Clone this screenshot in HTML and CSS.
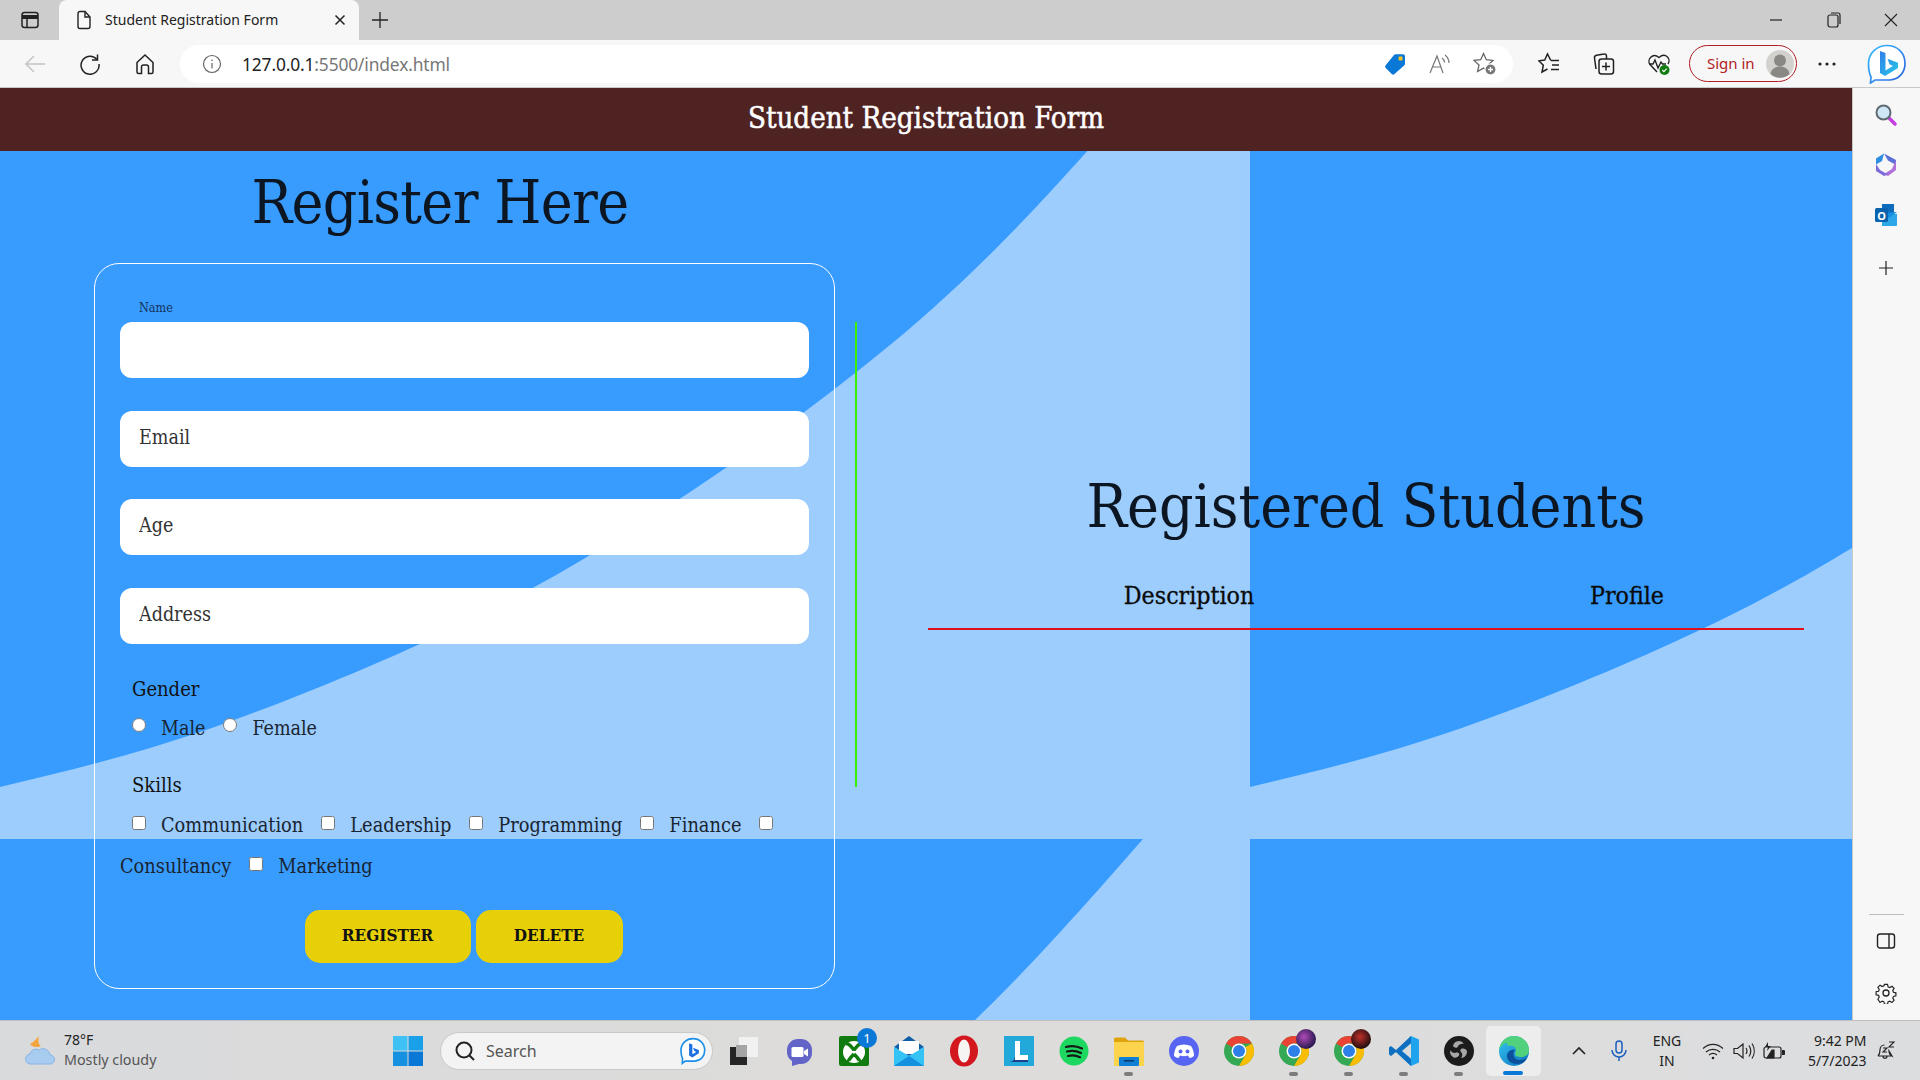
FILE: index.html
```html
<!DOCTYPE html>
<html lang="en">
<head>
<meta charset="utf-8">
<title>Student Registration Form</title>
<link rel="stylesheet" href="styles.css">
</head>
<body>
<div class="tabbar">
  <div class="tb-cell side-toggle"><svg width="20" height="20" viewBox="0 0 20 20" fill="none" stroke="#222" stroke-width="1.5"><rect x="2" y="2.5" width="16" height="15" rx="2.5"/><path d="M2 7h16" stroke-width="4"/><path d="M7 7v10"/></svg></div>
  <div class="tab">
    <svg class="tab-doc" width="18" height="20" viewBox="0 0 18 20" fill="none" stroke="#222" stroke-width="1.4"><path d="M3 3.5a2 2 0 0 1 2-2h5l5 5.5v9.500a2 2 0 0 1-2 2H5a2 2 0 0 1-2-2z"/><path d="M10 1.500v5.500h5"/></svg>
    <span class="tab-title">Student Registration Form</span>
    <svg class="tab-close" width="12" height="12" viewBox="0 0 12 12" stroke="#222" stroke-width="1.5"><path d="M1.500 1.500l9 9M10.500 1.500l-9 9"/></svg>
  </div>
  <div class="tb-cell new-tab"><svg width="18" height="18" viewBox="0 0 18 18" stroke="#222" stroke-width="1.3"><path d="M9 1v16M1 9h16"/></svg></div>
  <div class="spacer"></div>
  <div class="win-btn"><svg width="14" height="14" viewBox="0 0 14 14" stroke="#222" stroke-width="1.2"><path d="M1 7h12"/></svg></div>
  <div class="win-btn"><svg width="14" height="16" viewBox="0 0 14 16" fill="none" stroke="#222" stroke-width="1.2"><rect x="1" y="3" width="10" height="12" rx="2"/><path d="M4 1h7a2 2 0 0 1 2 2v9"/></svg></div>
  <div class="win-btn"><svg width="14" height="14" viewBox="0 0 14 14" stroke="#222" stroke-width="1.1"><path d="M1 1l12 12M13 1L1 13"/></svg></div>
</div>

<div class="toolbar">
  <div class="nav-btn"><svg width="22" height="20" viewBox="0 0 22 20" fill="none" stroke="#c4c4c4" stroke-width="1.500"><path d="M21 10H2M10 2l-8 8 8 8"/></svg></div>
  <div class="nav-btn"><svg width="22" height="22" viewBox="0 0 22 22" fill="none" stroke="#222" stroke-width="1.500"><path d="M18 6.500A9 9 0 1 0 20 11"/><path d="M18.500 1.500v5.500H13"/></svg></div>
  <div class="nav-btn"><svg width="20" height="22" viewBox="0 0 20 22" fill="none" stroke="#222" stroke-width="1.500"><path d="M2 9.500L10 2l8 7.500V19a1.500 1.500 0 0 1-1.500 1.500h-3V14a2 2 0 0 0-2-2h-3a2 2 0 0 0-2 2v6.500h-3A1.500 1.500 0 0 1 2 19z"/></svg></div>
  <div class="address">
    <svg class="info" width="20" height="20" viewBox="0 0 20 20" fill="none" stroke="#666" stroke-width="1.200"><circle cx="10" cy="10" r="8.500"/><path d="M10 9v5.500M10 5.500v1.500"/></svg>
    <span class="url"><span class="host">127.0.0.1</span>:5500/index.html</span>
    <div class="spacer"></div>
    <div class="addr-icon"><svg width="22" height="24" viewBox="0 0 22 24"><path d="M10 3a2 2 0 0 1 1.500-.7H19a2 2 0 0 1 2 2v7.500a2 2 0 0 1-.6 1.400L10.500 22a2 2 0 0 1-2.800 0l-6-6a2 2 0 0 1 0-2.800z" fill="#0a78d7"/><rect x="14.500" y="4.500" width="4" height="4" rx="1" fill="#f6c323"/></svg></div>
    <div class="addr-icon"><svg width="22" height="22" viewBox="0 0 22 22" fill="none" stroke="#777" stroke-width="1.200"><path d="M1 20L8 3l6 17M3.500 14h8.500"/><path d="M13 5c1.500 1 2.500 2.500 2.500 4.500M16 2c2.500 2 4 4.500 4 8"/></svg></div>
    <div class="addr-icon"><svg width="24" height="24" viewBox="0 0 24 24" fill="none" stroke="#666" stroke-width="1.300"><path d="M10.500 1.500l2.800 6.200 6.700.7-5 4.500 1.400 6.600-5.900-3.400-5.900 3.400 1.400-6.600-5-4.500 6.700-.7z"/><circle cx="17.500" cy="17.500" r="5.600" fill="#777" stroke="#fff"/><path d="M17.500 15v5M15 17.500h5" stroke="#fff"/></svg></div>
  </div>
  <div class="nav-btn narrow-first"><svg width="22" height="24" viewBox="0 0 22 24" fill="none" stroke="#222" stroke-width="1.500"><path d="M12.800 8.500L9.500 2 6.700 8l-5.900.8 4.500 4.400-1.300 6.800 5.500-3"/><path d="M13 8.500h8M14 13h7M13 17.500h8"/></svg></div>
  <div class="nav-btn"><svg width="22" height="24" viewBox="0 0 22 24" fill="none" stroke="#222" stroke-width="1.500"><rect x="6" y="7" width="14.500" height="15" rx="2.500"/><path d="M13 10.500v8M9 14.500h8"/><path d="M3 17L1.500 6a2.500 2.500 0 0 1 2-2.800L11 2a2 2 0 0 1 2.500 2v3"/></svg></div>
  <div class="nav-btn"><svg width="24" height="24" viewBox="0 0 24 24" fill="none" stroke="#222" stroke-width="1.400"><path d="M10 20L3 12.500C-.5 8 5.500 0 12 5.500 18.500 0 24.500 7 21 12"/><path d="M2 12h4l2-4 3 8 3-6 1.500 2H19"/><circle cx="17.500" cy="18" r="5" fill="#107c10" stroke="none"/><path d="M15.300 18l1.600 1.600 2.800-3" stroke="#fff" stroke-width="1.100"/></svg></div>
  <div class="signin">
    <span class="signin-text">Sign in</span>
    <svg class="avatar" width="28" height="28" viewBox="0 0 28 28"><circle cx="14" cy="14" r="14" fill="#d3d1cd"/><circle cx="14" cy="10.500" r="6" fill="#8a8885"/><path d="M4.500 24c1-5.500 5-7.500 9.500-7.500s8.500 2 9.500 7.500a14 14 0 0 1-19 0z" fill="#8a8885"/></svg>
  </div>
  <div class="nav-btn dots"><svg width="18" height="4" viewBox="0 0 18 4" fill="#222"><circle cx="2" cy="2" r="1.600"/><circle cx="9" cy="2" r="1.600"/><circle cx="16" cy="2" r="1.600"/></svg></div>
  <div class="bing-cell"><svg width="40" height="40" viewBox="0 0 40 40"><defs><linearGradient id="bg1" x1="0" y1="0" x2="1" y2="1"><stop offset="0" stop-color="#37bdff"/><stop offset="1" stop-color="#2b5fe0"/></linearGradient><linearGradient id="bg2" x1="0" y1="0" x2="1" y2="1"><stop offset="0" stop-color="#2f7ee8"/><stop offset="1" stop-color="#28c8e8"/></linearGradient></defs><path d="M20 1.500c10 0 18 7 18 18 0 9-6 16-15 16.500H8L3.500 39 4 33C2 29 1.500 24 1.500 19.500 1.500 9 10 1.500 20 1.500z" fill="#fff" stroke="url(#bg1)" stroke-width="1.700"/><path d="M13 7l5.500 2v17.500l7.500-4.500-3.500-1.700-2-5.500 10.500 4v5.200L18 32l-5-3z" fill="url(#bg2)"/></svg></div>
</div>

<div class="content-row">
  <div class="page">
    <header class="page-header">Student Registration Form</header>
    <main class="main">
      <section class="left">
        <h1 class="reg-title">Register Here</h1>
        <form class="card">
          <label class="name-label" for="name">Name</label>
          <input class="field" id="name" type="text">
          <input class="field" type="email" placeholder="Email">
          <input class="field" type="number" placeholder="Age">
          <input class="field" type="text" placeholder="Address">
          <div class="group-title gender-title">Gender</div>
          <div class="radio-row"><input class="opt opt-radio" type="radio" name="g"><label class="opt-label">Male</label><input class="opt opt-radio" type="radio" name="g"><label class="opt-label">Female</label></div>
          <div class="group-title skills-title">Skills</div>
          <div class="skills"><input class="opt" type="checkbox"><label class="opt-label">Communication</label><input class="opt" type="checkbox"><label class="opt-label">Leadership</label><input class="opt" type="checkbox"><label class="opt-label">Programming</label><input class="opt" type="checkbox"><label class="opt-label">Finance</label><input class="opt" type="checkbox"><label class="opt-label">Consultancy</label><input class="opt" type="checkbox"><label class="opt-label">Marketing</label></div>
          <div class="actions"><button class="btn btn-register" type="button">REGISTER</button><button class="btn btn-delete" type="button">DELETE</button></div>
        </form>
      </section>
      <div class="divider"></div>
      <section class="right">
        <h2 class="students-title">Registered Students</h2>
        <table class="students">
          <thead><tr><th>Description</th><th>Profile</th></tr></thead>
        </table>
      </section>
    </main>
  </div>
  <aside class="sidebar">
    <div class="side-item"><svg width="24" height="24" viewBox="0 0 24 24"><path d="M14 14l7 7" stroke="#c53ce0" stroke-width="3.500" stroke-linecap="round"/><circle cx="9.500" cy="9.500" r="7" fill="#cfe6f6" stroke="#5f6a72" stroke-width="2"/></svg></div>
    <div class="side-item"><svg width="24" height="26" viewBox="0 0 24 26"><path d="M10 1.500L2 6.500v6l6-3.500z" fill="#2c8ee0"/><path d="M10 1.500L22 8v5l-8-4.500z" fill="#5b6fd8"/><path d="M22 8v10l-8 6-4-2 8-5z" fill="#b070d8"/><path d="M2 12v7l8 5 4-1.500L6 18z" fill="#7c6bd8"/><circle cx="12" cy="13" r="3.500" fill="#f7f7f7"/></svg></div>
    <div class="side-item"><svg width="24" height="24" viewBox="0 0 24 24"><rect x="8" y="1" width="12" height="10" fill="#0f6cbd"/><path d="M8 11h15v11a1 1 0 0 1-1 1H8z" fill="#2ea7e8"/><path d="M23 9l-8 6-7-5" fill="#1490df"/><rect x="1" y="5" width="13" height="14" rx="1.500" fill="#0a63ad"/><text class="outlook-o" x="7.500" y="16.500">O</text></svg></div>
    <div class="side-item side-plus"><svg width="16" height="16" viewBox="0 0 16 16" stroke="#222" stroke-width="1.200"><path d="M8 1v14M1 8h14"/></svg></div>
    <div class="spacer"></div>
    <div class="side-sep"></div>
    <div class="side-item side-panel"><svg width="20" height="18" viewBox="0 0 20 18" fill="none" stroke="#222" stroke-width="1.400"><rect x="1.500" y="2" width="17" height="14" rx="2.500"/><path d="M13 2v14"/></svg></div>
    <div class="side-item side-gear"><svg width="22" height="22" viewBox="0 0 22 22" fill="none" stroke="#222" stroke-width="1.300"><circle cx="11" cy="11" r="3"/><path d="M9.300 1.500h3.400l.6 2.700 1.900.8 2.400-1.500 2.400 2.400-1.500 2.400.8 1.900 2.700.6v3.400l-2.700.6-.8 1.900 1.500 2.400-2.400 2.400-2.400-1.500-1.900.8-.6 2.700H9.300l-.6-2.700-1.900-.8-2.400 1.500L2 17.900l1.500-2.400-.8-1.900-2.700-.6V9.600l2.700-.6.8-1.900L2 4.700l2.400-2.400 2.400 1.500 1.900-.8z" transform="translate(1.100 1.100) scale(.9)"/></svg></div>
  </aside>
</div>

<footer class="taskbar">
  <div class="weather">
    <svg class="weather-icon" width="32" height="32" viewBox="0 0 32 32"><path d="M15 1c-3 3-6 7-9 8 2 3 7 4 11 2-3-2-3-6-2-10z" fill="#f2a33a"/><path d="M7 29a5 5 0 0 1-1-10 6 6 0 0 1 9-4 7 7 0 0 1 11 5 4.500 4.500 0 0 1 0 9z" fill="#a8ccf0" stroke="#86b4e6"/></svg>
    <div class="weather-text"><span class="temp">78°F</span><span class="cond">Mostly cloudy</span></div>
  </div>
  <div class="app"><svg width="30" height="30" viewBox="0 0 30 30"><rect width="14.500" height="14.500" fill="#3fc1f5"/><rect x="15.500" width="14.500" height="14.500" fill="#1aa0e8"/><rect y="15.500" width="14.500" height="14.500" fill="#1690e0"/><rect x="15.500" y="15.500" width="14.500" height="14.500" fill="#0a78d7"/></svg></div>
  <div class="search">
    <svg width="22" height="22" viewBox="0 0 22 22" fill="none" stroke="#222" stroke-width="2"><circle cx="10" cy="10" r="7.500"/><path d="M15 15l5 5"/></svg>
    <span class="search-text">Search</span>
    <div class="spacer"></div>
    <svg width="26" height="28" viewBox="0 0 40 42"><path d="M20 2c10 0 18 7 18 18 0 9-6 16-15 16.500H8L3.500 40 4 33C2 29 1.500 24 1.500 20 1.500 9 10 2 20 2z" fill="#fff" stroke="#1c8fe8" stroke-width="2.500"/><path d="M14 9l5 2v15l6-3.500-3-1.500-2-5 9 3.500v5L19 31l-5-3z" fill="#1d6fe0"/></svg>
  </div>
  <div class="apps">
    <div class="app"><svg width="32" height="32" viewBox="0 0 32 32"><rect x="2" y="12" width="17" height="18" fill="#262626"/><rect x="11" y="2" width="19" height="20" fill="#f5f5f5" opacity=".85"/><rect x="8" y="10" width="11" height="12" fill="#a5a5a5"/></svg></div>
    <div class="app"><svg width="30" height="30" viewBox="0 0 30 30"><path d="M14 3h3a11 11 0 0 1 11 11v3a11 11 0 0 1-11 11h-2l-7 2v-5A11 11 0 0 1 3 15v-1A11 11 0 0 1 14 3z" fill="#6264c8"/><path d="M9 11h9a1.500 1.500 0 0 1 1.500 1.500v7a1.500 1.500 0 0 1-1.500 1.500H9a1.500 1.500 0 0 1-1.500-1.500v-7A1.500 1.500 0 0 1 9 11z" fill="#fff"/><path d="M20 15l4-2.500v8L20 18z" fill="#fff"/></svg></div>
    <div class="app"><svg width="30" height="30" viewBox="0 0 30 30"><rect width="30" height="30" rx="2" fill="#107c10"/><circle cx="15" cy="16" r="11" fill="#fff"/><path d="M15 14C11 9 8.500 6.500 6.500 8.500M15 14c4-5 6.500-7.500 8.500-5.500M15 18c-4 4-7 8-5 8.500M15 18c4 4 7 8 5 8.500" stroke="#107c10" stroke-width="3.500" fill="none"/></svg><span class="badge">1</span></div>
    <div class="app"><svg width="30" height="30" viewBox="0 0 30 30"><path d="M0 11L15 0l15 11-15 9z" fill="#0f5fa8"/><rect x="5" y="5" width="20" height="13" fill="#fff"/><path d="M0 11l15 9 15-9v19H0z" fill="#35c2f5"/><path d="M0 30l15-10 15 10z" fill="#1490df"/></svg></div>
    <div class="app"><svg width="30" height="32" viewBox="0 0 30 32"><ellipse cx="15" cy="16" rx="14" ry="15.500" fill="#d4161f"/><ellipse cx="15" cy="16" rx="6" ry="11.500" fill="#f7f5f4"/></svg></div>
    <div class="app"><svg width="30" height="30" viewBox="0 0 30 30"><rect width="30" height="30" fill="#22a9d9"/><path d="M11 5h5v14h8v5H11z" fill="#fff"/><path d="M6 26c4-1 5-3 5-7v5h13v2z" fill="#1e3f8c"/></svg></div>
    <div class="app"><svg width="30" height="30" viewBox="0 0 30 30"><circle cx="15" cy="15" r="14.500" fill="#1ed760"/><path d="M7 11c5-1.500 11-1 16 1.500M8 15.500c4.500-1.200 9.500-.8 14 1.500M9 20c4-1 8-.7 12 1.200" stroke="#161616" stroke-width="2.200" stroke-linecap="round" fill="none"/></svg></div>
    <div class="app has-dot"><svg width="30" height="32" viewBox="0 0 30 32"><path d="M0 4a1.500 1.500 0 0 1 1.500-1.500H11l3 3h14A1.500 1.500 0 0 1 30 7v4H0z" fill="#dfa30b"/><path d="M0 7h30v23a1 1 0 0 1-1 1H1a1 1 0 0 1-1-1z" fill="#fcd34c"/><rect x="5" y="22" width="20" height="9" rx="1" fill="#0f7fd6"/><rect x="10" y="25" width="10" height="1.600" fill="#063a6e"/></svg></div>
    <div class="app"><svg width="30" height="30" viewBox="0 0 30 30"><circle cx="15" cy="15" r="15" fill="#5865f2"/><path d="M8 10c4.500-2 9.500-2 14 0 2 3 3 6 3 10-1.500 1-3 2-4.500 2l-1.500-2.500c-3 1-5 1-8 0L9.500 22C8 22 6.500 21 5 20c0-4 1-7 3-10z" fill="#fff"/><circle cx="11.500" cy="15.500" r="2" fill="#5865f2"/><circle cx="18.500" cy="15.500" r="2" fill="#5865f2"/></svg></div>
    <div class="app"><svg class="chrome" width="30" height="30" viewBox="0 0 30 30"><circle cx="15" cy="15" r="15" fill="#34a853"/><path d="M15 0a15 15 0 0 1 13 7.500H15a7.500 7.500 0 0 0-6.500 3.700L2.100 7.400A15 15 0 0 1 15 0z" fill="#ea4335"/><path d="M28 7.500A15 15 0 0 1 15 30l6.500-11.200A7.500 7.500 0 0 0 21.500 11z" fill="#fbbc04"/><circle cx="15" cy="15" r="7.500" fill="#fff"/><circle cx="15" cy="15" r="6" fill="#2f7fe8"/></svg></div>
    <div class="app has-dot"><svg class="chrome" width="30" height="30" viewBox="0 0 30 30"><circle cx="15" cy="15" r="15" fill="#34a853"/><path d="M15 0a15 15 0 0 1 13 7.500H15a7.500 7.500 0 0 0-6.500 3.700L2.100 7.400A15 15 0 0 1 15 0z" fill="#ea4335"/><path d="M28 7.500A15 15 0 0 1 15 30l6.500-11.200A7.500 7.500 0 0 0 21.500 11z" fill="#fbbc04"/><circle cx="15" cy="15" r="7.500" fill="#fff"/><circle cx="15" cy="15" r="6" fill="#2f7fe8"/></svg><span class="profile-pic pic-purple"></span></div>
    <div class="app has-dot"><svg class="chrome" width="30" height="30" viewBox="0 0 30 30"><circle cx="15" cy="15" r="15" fill="#34a853"/><path d="M15 0a15 15 0 0 1 13 7.500H15a7.500 7.500 0 0 0-6.500 3.700L2.100 7.400A15 15 0 0 1 15 0z" fill="#ea4335"/><path d="M28 7.500A15 15 0 0 1 15 30l6.500-11.200A7.500 7.500 0 0 0 21.500 11z" fill="#fbbc04"/><circle cx="15" cy="15" r="7.500" fill="#fff"/><circle cx="15" cy="15" r="6" fill="#2f7fe8"/></svg><span class="profile-pic pic-red"></span></div>
    <div class="app has-dot"><svg width="30" height="30" viewBox="0 0 30 30"><path d="M22 0l8 3.500v23L22 30 7 16z" fill="#1fa3ec"/><path d="M22 0L7 14 2 10 0 11.500v7L2 20l5-4 15 14 0-7-9-8 9-8z" fill="#0f6fc0"/><path d="M22 7.500v15L13 15z" fill="#d9dbdc"/></svg></div>
    <div class="app has-dot"><svg width="30" height="30" viewBox="0 0 30 30"><circle cx="15" cy="15" r="15" fill="#1b1b1b"/><path d="M9 10a6 6 0 0 1 11-2c-2.500-.8-5 0-6 2.500-1 1.800-3.500 1.600-5-.5zM23 16a6 6 0 0 1-6 6c1.800-1.700 1.700-4.200 0-6-1.300-1.300-.5-3.400 1.700-3.400 1.800 0 4.300 1 4.300 3.400zM9 21a6 6 0 0 1-2.500-7c1 2.600 3.500 3.400 6 2.600 1.800-.4 3.400.9 2.600 2.600-.9 1.700-4.300 3.400-6.100 1.800z" fill="#a8a8a8"/></svg></div>
    <div class="app active"><svg width="30" height="30" viewBox="0 0 30 30"><defs><linearGradient id="ed" x1="0" y1="0" x2="1" y2="1"><stop offset="0" stop-color="#36c7f0"/><stop offset="1" stop-color="#0b6fbe"/></linearGradient></defs><circle cx="15" cy="15" r="15" fill="url(#ed)"/><path d="M15 0c8 0 15 6 15 14 0 5-4 7-8 7-3 0-6-1-6-3 0-1 1-2 1-4 0-4-5-5-9-4C10 6 5 5 0 14 1 6 7 0 15 0z" fill="#52d17c"/><path d="M16 14c-4-1-8 2-8 6 0 5 5 8 10 8 4 0 8-2 10-6-3 2-8 3-11 1-3-2-3-7-1-9z" fill="#0c4f9c"/></svg><span class="active-bar"></span></div>
  </div>
  <div class="tray">
    <div class="tray-cell chev"><svg width="14" height="9" viewBox="0 0 14 9" fill="none" stroke="#222" stroke-width="1.600"><path d="M1 8l6-6 6 6"/></svg></div>
    <div class="tray-cell mic"><svg width="16" height="22" viewBox="0 0 16 22" fill="none" stroke="#1d5fbf" stroke-width="1.500"><rect x="5" y="1" width="6" height="12" rx="3"/><path d="M1 10a7 7 0 0 0 14 0M8 17v4"/></svg></div>
    <div class="lang"><span>ENG</span><span>IN</span></div>
    <div class="tray-cell wifi"><svg width="22" height="18" viewBox="0 0 22 18" fill="none" stroke="#222" stroke-width="1.200"><path d="M1 6.500c6-5.500 14-5.500 20 0M4 10c4-3.500 10-3.500 14 0M7 13c2.500-2 5.500-2 8 0"/><circle cx="11" cy="16" r="1.300" fill="#222" stroke="none"/></svg></div>
    <div class="tray-cell vol"><svg width="22" height="18" viewBox="0 0 22 18" fill="none" stroke="#222" stroke-width="1.200"><path d="M1 6.500h3.500L10 2v14l-5.500-4.500H1zM13 6c1.300 2 1.300 4 0 6M16 3.500c2.300 3.500 2.300 7.500 0 11M19 1.500c3 4.500 3 10.500 0 15"/></svg></div>
    <div class="tray-cell batt"><svg width="22" height="18" viewBox="0 0 22 18" fill="none" stroke="#222" stroke-width="1.200"><rect x="1" y="5" width="17" height="11" rx="2"/><path d="M4 16L9 8h2v8z" fill="#222"/><path d="M5 0L2 5h3l-1 4 4-5H5z" fill="#222" stroke="none"/><path d="M19 8.500h1.500a1 1 0 0 1 1 1v2a1 1 0 0 1-1 1H19" fill="#222"/></svg></div>
    <div class="clock"><span>9:42 PM</span><span>5/7/2023</span></div>
    <div class="tray-cell bell"><svg width="20" height="20" viewBox="0 0 20 20" fill="none" stroke="#222" stroke-width="1.200"><path d="M2 15c2-2 2-3 2-6 0-3 2-5 4.500-5M13 10c0 3 1 4 3 5zM2 15h14M7 15c0 3 4 3 4 0"/><path d="M7 7h4l-4 4h4M13 1h5l-5 5h5" stroke-width="1.100"/></svg></div>
  </div>
</footer>
</body>
</html>
```
FILE: styles.css
```css
* { box-sizing: border-box; }
html, body { margin: 0; height: 100%; overflow: hidden; }
body { width: 1920px; height: 1080px; display: flex; flex-direction: column; font-family: "Noto Sans", "Open Sans", sans-serif; color: #222; }
.spacer { flex: 1; }

/* browser chrome */
.tabbar { height: 40px; background: #cdcdcd; display: flex; align-items: stretch; }
.tb-cell { display: flex; align-items: center; justify-content: center; }
.side-toggle { width: 59px; }
.new-tab { width: 42px; }
.tab { width: 300px; background: #f7f7f7; border-radius: 8px 8px 0 0; display: flex; align-items: center; padding: 0 13px 0 16px; }
.tab-title { font-size: 14px; margin-left: 12px; padding-bottom: 2px; white-space: nowrap; }
.tab-close { margin-left: auto; }
.win-btn { width: 57.500px; display: flex; align-items: center; justify-content: center; }
.toolbar { height: 48px; background: #f7f7f7; border-bottom: 1px solid #c9c9c9; display: flex; align-items: center; padding-left: 7.500px; }
.nav-btn { width: 55px; height: 40px; display: flex; align-items: center; justify-content: center; flex: none; }
.address { width: 1333px; height: 38px; margin-left: 7.500px; margin-right: 8.500px; background: #fff; border-radius: 19px; display: flex; align-items: center; padding: 0 5.500px 0 22px; flex: none; }
.url { font-size: 17.400px; color: #777; margin-left: 20px; letter-spacing: -.15px; white-space: nowrap; }
.host { color: #222; }
.addr-icon { width: 45px; display: flex; justify-content: center; align-items: center; }
.signin { width: 108px; height: 37px; margin-left: 2.500px; border: 1.500px solid #b01c22; border-radius: 19px; display: flex; align-items: center; flex: none; padding: 0 2.500px 0 17px; justify-content: space-between; }
.signin-text { font-size: 15px; color: #b01c22; white-space: nowrap; padding-bottom: 2px; }
.dots { margin-left: 2.500px; }
.bing-cell { width: 65.500px; display: flex; justify-content: center; align-items: center; flex: none; }

/* layout */
.content-row { flex: 1; min-height: 0; display: flex; }
.page { flex: 1; min-width: 0; display: flex; flex-direction: column; font-family: "DejaVu Serif", "Liberation Serif", serif; font-stretch: condensed; color: #111; }
.sidebar { width: 68px; flex: none; background: #f7f7f7; border-left: 1px solid #c9c9c9; display: flex; flex-direction: column; align-items: center; padding: 2px 1px 0 0; }
.side-item { width: 100%; height: 50px; display: flex; align-items: center; justify-content: center; }
.side-plus { margin-top: 3px; }
.side-sep { width: 35px; height: 1px; background: #bdbdbd; margin-bottom: 1px; }
.side-panel { height: 50px; }
.side-gear { height: 54px; }
.outlook-o { font: 700 11px "Noto Sans", sans-serif; fill: #fff; text-anchor: middle; }

/* page */
.page-header { height: 63px; background: #502323; color: #fff; font-size: 29.200px; -webkit-text-stroke: .5px #fff; padding-bottom: 4px; display: flex; align-items: center; justify-content: center; flex: none; }
.main { flex: 1; min-height: 0; display: flex; align-items: flex-start; background-color: #389cff; background-image: url("data:image/svg+xml,%3Csvg xmlns='http://www.w3.org/2000/svg' width='1250' height='751'%3E%3Cpath fill='%239ccdfd' d='M0 699C66.700 683 129.700 668 200 644C270.300 620 355 585.700 422 555C489 524.300 537.800 498.800 602 460C666.200 421.200 745.200 368.200 807 322C868.800 275.800 917 236.700 973 183C1029 129.300 1086.300 65 1143 0H1250V751H0Z'/%3E%3C/svg%3E"); background-size: 1250px 751px; background-position: 0 -63px; background-repeat: repeat; }
.left { width: 855px; flex: none; }
.reg-title { width: 856px; margin: 15px 0 25px; padding-left: 24px; text-align: center; font-size: 60px; line-height: 72px; font-weight: 400; letter-spacing: -.65px; color: #0c1622; white-space: nowrap; }
.card { width: 741px; margin-left: 94px; border: 1px solid #fff; border-radius: 25px; padding: 36px 25px 25px; }
.name-label { display: block; height: 16px; line-height: 16px; font-size: 12.500px; padding-left: 19px; margin-bottom: 6px; color: #14305a; }
.field { display: block; width: 689px; height: 56px; border: 0; border-radius: 12px; background: #fff; padding: 0 19px 3px; margin-bottom: 32.500px; font: 19.500px "DejaVu Serif", serif; font-stretch: condensed; outline: 0; }
.field::placeholder { color: #333; }
.group-title { font-size: 20px; line-height: 26px; padding-left: 12px; }
.gender-title { margin-top: .5px; }
.radio-row { margin-top: 14px; font-size: 19.500px; line-height: 26px; color: #1a2430; }
.skills-title { margin-top: 30px; }
.skills { margin-top: 7px; font-size: 19.800px; line-height: 41px; color: #1a2430; }
.opt { width: 14px; height: 14px; margin: 0 15px 0 12px; vertical-align: 2.500px; }
.opt-radio { vertical-align: 3.500px; }
.opt-label { margin-right: 6px; }
.actions { margin-top: 23px; display: flex; justify-content: center; gap: 5px; padding-right: 2px; }
.btn { height: 53px; border: 0; border-radius: 15px; background: #e8d008; color: #111; font: 700 17px "DejaVu Serif", serif; font-stretch: condensed; padding: 0 0 3px; }
.btn-register { width: 166px; }
.btn-delete { width: 147px; }
.divider { width: 2px; height: 465px; margin-top: 171px; background: #3cf000; flex: none; }
.right { flex: 1; min-width: 0; padding: 319px 48px 0 71px; }
.students-title { margin: 0; text-align: center; font-size: 60px; line-height: 72px; font-weight: 400; color: #0c1622; white-space: nowrap; }
.students { width: 100%; margin-top: 24px; border-collapse: collapse; table-layout: fixed; }
.students th { height: 63px; padding: 0 0 3px 84px; font-size: 24.700px; font-weight: 400; -webkit-text-stroke: .3px #0a0a0a; border-bottom: 2px solid #e0101c; color: #0a0a0a; }

/* taskbar */
.taskbar { height: 60px; flex: none; background: linear-gradient(90deg, #d9dadc, #dddcda 50%, #dcdddf); border-top: 1px solid #bfbfbf; display: flex; align-items: center; font-size: 14px; }
.weather { width: 380px; display: flex; align-items: center; padding-left: 24px; }
.weather-text { display: flex; flex-direction: column; margin-left: 8px; line-height: 20px; padding-bottom: 2px; }
.temp { color: #222; }
.cond { color: #555; font-size: 14.300px; }
.app { width: 55px; height: 50px; flex: none; position: relative; display: flex; align-items: center; justify-content: center; }
.search { width: 273px; height: 38px; margin-left: 5px; margin-right: 3px; background: #f3f3f3; border: 1px solid #c9c9c9; border-radius: 19px; display: flex; align-items: center; padding: 0 6px 0 13px; flex: none; }
.search-text { font-size: 16px; color: #555; margin-left: 10px; }
.apps { display: flex; flex: none; }
.badge { position: absolute; top: 2px; right: 4px; width: 20px; height: 20px; border-radius: 50%; background: #0a78d7; color: #fff; font-size: 13px; text-align: center; line-height: 20px; }
.has-dot::after { content: ""; position: absolute; left: 23px; bottom: 0; width: 9px; height: 4px; border-radius: 2px; background: #7d7d7d; }
.profile-pic { position: absolute; width: 20px; height: 20px; border-radius: 50%; top: 3px; left: 30px; }
.pic-purple { background: radial-gradient(circle at 40% 40%, #b04ab8, #2a1a50 70%); }
.pic-red { background: radial-gradient(circle at 45% 40%, #c0302a, #241010 70%); }
.active { background: #ededed; border-radius: 5px; }
.active-bar { position: absolute; left: 17px; bottom: 1px; width: 20px; height: 4px; border-radius: 2px; background: #0a78d7; }
.tray { display: flex; align-items: center; margin-left: 18px; }
.tray-cell { height: 40px; display: flex; align-items: center; justify-content: center; }
.chev, .mic { width: 40px; }
.lang { width: 56px; display: flex; flex-direction: column; align-items: center; line-height: 20px; margin-right: 3px; }
.wifi, .vol, .batt { width: 30.500px; }
.clock { width: 77px; display: flex; flex-direction: column; align-items: flex-end; line-height: 20px; }
.bell { width: 38px; }
```
